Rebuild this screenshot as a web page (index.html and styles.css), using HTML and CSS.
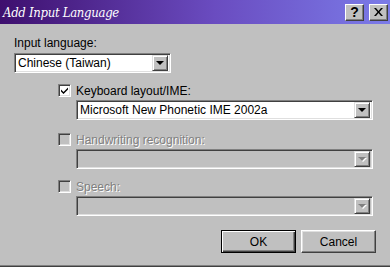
FILE: index.html
```html
<!DOCTYPE html>
<html lang="en">
<head>
  <meta charset="UTF-8">
  <title>Add Input Language</title>
  <link rel="stylesheet" href="styles.css">
</head>
<body>
  <div class="window">
    <div class="titlebar">
      <span class="title">Add Input Language</span>
      <div class="caption-buttons">
        <span class="cap-btn help">?</span>
        <span class="cap-btn close">
          <svg width="9" height="8" viewBox="0 0 9 8"><path d="M0 0h2l2.5 3 2.5-3h2l-3.5 4 3.5 4h-2l-2.5-3-2.5 3h-2l3.5-4z" fill="#000"/></svg>
        </span>
      </div>
    </div>

    <div class="content">
      <div class="label">Input language:</div>
      <div class="combo lang">
        <span class="value">Chinese (Taiwan)</span>
        <span class="drop"><span class="arrow"></span></span>
      </div>

      <div class="group">
        <div class="check-row">
          <span class="checkbox">
            <svg width="9" height="9" viewBox="0 0 9 9"><path d="M1 3.5l2.5 2.5 4.5-4.5v2l-4.5 4.5-2.5-2.5z" fill="#000"/></svg>
          </span>
          <span class="check-label">Keyboard layout/IME:</span>
        </div>
        <div class="combo wide">
          <span class="value">Microsoft New Phonetic IME 2002a</span>
          <span class="drop"><span class="arrow"></span></span>
        </div>

        <div class="check-row disabled gap-lg">
          <span class="checkbox"></span>
          <span class="check-label">Handwriting recognition:</span>
        </div>
        <div class="combo wide disabled">
          <span class="value"></span>
          <span class="drop"><span class="arrow"></span></span>
        </div>

        <div class="check-row disabled">
          <span class="checkbox"></span>
          <span class="check-label">Speech:</span>
        </div>
        <div class="combo wide disabled">
          <span class="value"></span>
          <span class="drop"><span class="arrow"></span></span>
        </div>
      </div>

      <div class="buttons">
        <button class="btn default">OK</button>
        <button class="btn">Cancel</button>
      </div>
    </div>
  </div>
</body>
</html>
```

FILE: styles.css
```css
body {
  margin: 0;
  background: #c0c0c0;
  font-family: "Liberation Sans", Arial, sans-serif;
  font-size: 12px;
  color: #000;
}
.window {
  width: 390px;
  height: 267px;
  box-sizing: border-box;
  background: #c0c0c0;
  border-bottom: 1px solid #404040;
  box-shadow: inset 0 -1px 0 #808080;
  display: flex;
  flex-direction: column;
}
.titlebar {
  height: 24px;
  background: linear-gradient(to right, #3e0f6e, #6a4cc0 55%, #7b7be8);
  display: flex;
  align-items: center;
  justify-content: space-between;
  padding: 0 2px 0 3px;
}
.title {
  color: #fff;
  font-family: "DejaVu Serif", serif;
  font-stretch: condensed;
  font-style: italic;
  font-size: 13px;
  letter-spacing: -0.3px;
}
.caption-buttons {
  display: flex;
  gap: 5px;
}
.cap-btn {
  width: 19px;
  height: 17px;
  box-sizing: border-box;
  background: #c0c0c0;
  border: 1px solid;
  border-color: #fff #404040 #404040 #fff;
  box-shadow: inset -1px -1px 0 #808080;
  display: flex;
  align-items: center;
  justify-content: center;
}
.help {
  font-weight: bold;
  font-size: 14px;
  line-height: 1;
}
.content {
  padding: 13px 14px 0 14px;
  display: flex;
  flex-direction: column;
}
.label {
  height: 13px;
  line-height: 13px;
}
.combo {
  height: 20px;
  box-sizing: border-box;
  background: #fff;
  border: 1px solid;
  border-color: #808080 #fff #fff #808080;
  box-shadow: inset 1px 1px 0 #404040, inset -1px -1px 0 #dfdfdf;
  display: flex;
  align-items: center;
  padding: 2px;
  margin-top: 3px;
}
.combo .value {
  flex: 1;
  padding-left: 1px;
}
.combo.lang {
  width: 157px;
}
.combo.wide {
  width: 297px;
  margin-left: 18px;
}
.combo.disabled {
  background: #c0c0c0;
}
.drop {
  width: 16px;
  height: 16px;
  box-sizing: border-box;
  background: #c0c0c0;
  border: 1px solid;
  border-color: #dfdfdf #404040 #404040 #dfdfdf;
  box-shadow: inset 1px 1px 0 #fff, inset -1px -1px 0 #808080;
  display: flex;
  align-items: center;
  justify-content: center;
}
.arrow {
  width: 0;
  height: 0;
  border-left: 4px solid transparent;
  border-right: 4px solid transparent;
  border-top: 4px solid #000;
}
.disabled .arrow {
  border-top-color: #808080;
  filter: drop-shadow(1px 1px 0 #fff);
}
.group {
  padding-left: 44px;
  margin-top: 11px;
  display: flex;
  flex-direction: column;
}
.check-row {
  display: flex;
  align-items: center;
  height: 13px;
}
.check-row.gap-lg {
  margin-top: 13px;
}
.check-row.disabled:not(.gap-lg) {
  margin-top: 11px;
}
.checkbox {
  width: 13px;
  height: 13px;
  box-sizing: border-box;
  background: #fff;
  border: 1px solid;
  border-color: #808080 #fff #fff #808080;
  box-shadow: inset 1px 1px 0 #404040, inset -1px -1px 0 #dfdfdf;
  display: flex;
  align-items: center;
  justify-content: center;
  margin-right: 5px;
}
.check-row.disabled .checkbox {
  background: #c0c0c0;
}
.check-row.disabled .check-label {
  color: #808080;
  text-shadow: 1px 1px 0 #fff;
}
.buttons {
  margin-top: 14px;
  display: flex;
  justify-content: flex-end;
  gap: 5px;
}
.btn {
  width: 75px;
  height: 23px;
  box-sizing: border-box;
  font-family: "Liberation Sans", Arial, sans-serif;
  font-size: 12px;
  color: #000;
  background: #c0c0c0;
  border: 1px solid;
  border-color: #fff #404040 #404040 #fff;
  box-shadow: inset -1px -1px 0 #808080, inset 1px 1px 0 #dfdfdf;
  padding: 0;
}
.btn.default {
  border: 1px solid #000;
  box-shadow: inset 1px 1px 0 #fff, inset -1px -1px 0 #404040, inset -2px -2px 0 #808080;
}
```
